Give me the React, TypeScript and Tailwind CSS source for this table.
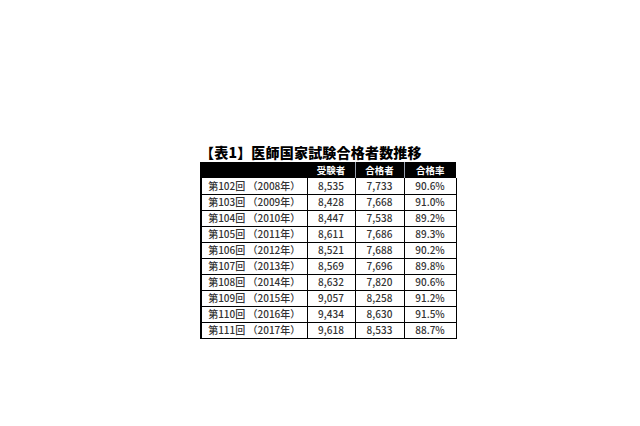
import React from "react";

const rows = [
  ["第102回 （2008年）", "8,535", "7,733", "90.6%"],
  ["第103回 （2009年）", "8,428", "7,668", "91.0%"],
  ["第104回 （2010年）", "8,447", "7,538", "89.2%"],
  ["第105回 （2011年）", "8,611", "7,686", "89.3%"],
  ["第106回 （2012年）", "8,521", "7,688", "90.2%"],
  ["第107回 （2013年）", "8,569", "7,696", "89.8%"],
  ["第108回 （2014年）", "8,632", "7,820", "90.6%"],
  ["第109回 （2015年）", "9,057", "8,258", "91.2%"],
  ["第110回 （2016年）", "9,434", "8,630", "91.5%"],
  ["第111回 （2017年）", "9,618", "8,533", "88.7%"],
];

const App = () => {
  return (
    <div className="w-[640px] h-[426px] bg-white font-['Noto_Sans_CJK_JP',sans-serif] pt-[145px] pl-[200px]">
      <div className="text-[14px] leading-[15px] font-black text-black tracking-[0.2px] mb-[2px]">
        【表1】医師国家試験合格者数推移
      </div>
      <table className="border-collapse border-l-2 border-black text-[10px] leading-[12px]">
        <thead>
          <tr className="h-[16px] bg-black text-white font-bold text-[9.5px]">
            <th className="w-[106px] p-0"></th>
            <th className="w-[48px] p-0 border-l border-black">受験者</th>
            <th className="w-[49px] p-0 border-l border-gray-400">合格者</th>
            <th className="w-[52px] p-0 border-l border-gray-400">合格率</th>
          </tr>
        </thead>
        <tbody className="text-[#333] font-medium">
          {rows.map((r) => (
            <tr key={r[0]} className="h-[16px] border-b border-black">
              <td className="p-0 text-center border-r border-black">{r[0]}</td>
              <td className="p-0 text-center border-r border-black">{r[1]}</td>
              <td className="p-0 text-center border-r border-black">{r[2]}</td>
              <td className="p-0 text-center border-r border-black">{r[3]}</td>
            </tr>
          ))}
        </tbody>
      </table>
    </div>
  );
};

export default App;
